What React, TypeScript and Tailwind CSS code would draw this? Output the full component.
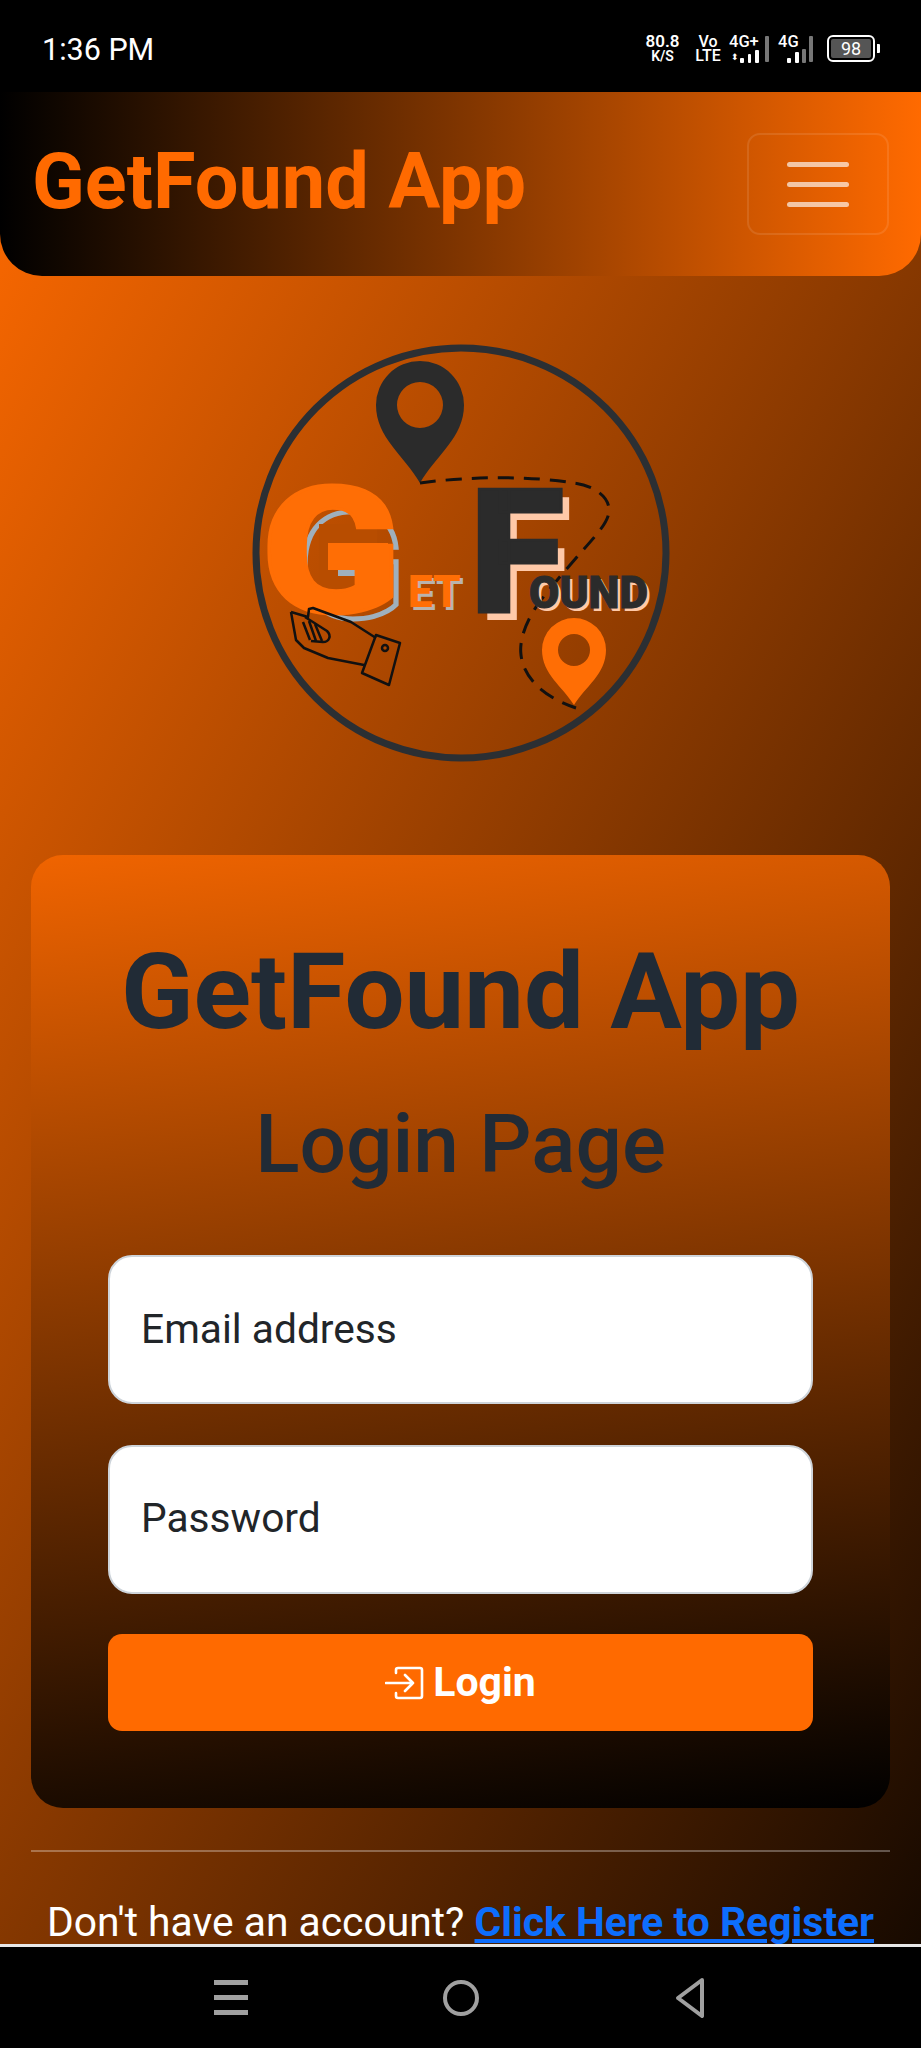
import React from "react";

const PinPath = ({ cx, cy, r, ri, tip, fill }: { cx: number; cy: number; r: number; ri: number; tip: number; fill: string }) => (
  <path
    fillRule="evenodd"
    fill={fill}
    d={`M${cx} ${tip} C${cx - r * 0.35} ${cy + r * 1.15} ${cx - r} ${cy + r * 0.75} ${cx - r} ${cy} A${r} ${r} 0 0 1 ${cx + r} ${cy} C${cx + r} ${cy + r * 0.75} ${cx + r * 0.35} ${cy + r * 1.15} ${cx} ${tip}Z M${cx - ri} ${cy} A${ri} ${ri} 0 1 0 ${cx + ri} ${cy} A${ri} ${ri} 0 1 0 ${cx - ri} ${cy}Z`}
  />
);

const Logo = () => (
  <svg viewBox="0 0 440 440" className="w-[440px] h-[440px]" style={{ fontFamily: "Roboto, sans-serif" }}>
    <circle cx="220" cy="223" r="205" fill="none" stroke="#2b2f33" strokeWidth="7" />
    <PinPath cx={179} cy={75} r={44} ri={23} tip={153} fill="#2b2b2b" />
    <path d="M179 153 C230 146 290 146 333 153 C350 155 368 165 368 180 C368 197 345 213 300 270 C285 290 278 310 280 325 C283 350 305 368 335 378" fill="none" stroke="#111" strokeWidth="3" strokeDasharray="16 10" />
    <text x="58" y="288" fontSize="146" fontWeight="900" textLength="104" lengthAdjust="spacingAndGlyphs" fill="none" stroke="#9fb0bd" strokeWidth="5">G</text>
    <rect x="78" y="194" width="58" height="70" fill="#b84d00" />
    <rect x="97" y="238" width="20" height="8" fill="#9fb0bd" />
    <text x="20" y="282" fontSize="176" fontWeight="900" textLength="140" lengthAdjust="spacingAndGlyphs" fill="#ff6e05" stroke="#ff6e05" strokeWidth="3">G</text>
    <rect x="87" y="213" width="60" height="27" fill="#ff6e05" />
    <text x="170" y="280" fontSize="44" fontWeight="900" fill="#b9b3ad">ET</text>
    <text x="167" y="277" fontSize="44" fontWeight="900" fill="#ff6e05">ET</text>
    <text x="237" y="290" fontSize="172" fontWeight="900" fill="#ffc9a8">F</text>
    <text x="229" y="282" fontSize="172" fontWeight="900" fill="#2b2b2b" stroke="#2b2b2b" strokeWidth="3">F</text>
    <text x="291" y="281" fontSize="44" fontWeight="900" fill="#ffc9a8">OUND</text>
    <text x="288" y="278" fontSize="44" fontWeight="900" fill="#2b2b2b" stroke="#2b2b2b" strokeWidth="1">OUND</text>
    <PinPath cx={333} cy={320} r={32} ri={16} tip={375} fill="#ff6e05" />
    <g fill="none" stroke="#111" strokeWidth="2.5" strokeLinejoin="round">
      <path d="M50 282 L55 310 L63 318 L87 328 L123 335" />
      <path d="M50 282 L67 287 L68 279 L72 278 L110 292 L135 308" />
      <path d="M135 305 L159 313 L148 355 L121 343 Z" />
      <circle cx="144" cy="318" r="3" />
      <path d="M64 287 L86 301 C91 306 88 312 82 312 L70 311" />
      <path d="M62 292 L69 310 M68 291 L75 311 M74 294 L81 311" />
    </g>
  </svg>
);

const Sig = ({ className }: { className: string }) => <div className={`w-[4px] rounded-[1px] ${className}`} />;

const StatusBar = () => (
  <div className="h-[92px] bg-black flex items-center justify-between pl-[42px] pr-[41px] text-white shrink-0">
    <span className="text-[30.5px] leading-none mt-[8px]">1:36 PM</span>
    <div className="flex items-center mt-[5px]">
      <div className="flex flex-col items-center font-semibold w-[33px]">
        <span className="text-[17px] leading-[15px]">80.8</span>
        <span className="text-[14px] leading-[14px]">K/S</span>
      </div>
      <div className="flex flex-col items-center font-medium w-[26px] ml-[16px]">
        <span className="text-[16px] leading-[15px]">Vo</span>
        <span className="text-[16px] leading-[14px]">LTE</span>
      </div>
      <div className="ml-[8px] flex flex-col w-[30px] font-medium">
        <span className="text-[16.5px] leading-[14px] whitespace-nowrap">4G+</span>
        <div className="flex items-end h-[14px]">
          <span className="text-[9px] leading-[12px] w-[12px] pl-[2px]">⬍</span>
          <Sig className="h-[5px] bg-white" />
          <Sig className="h-[9px] bg-white ml-[4px]" />
          <Sig className="h-[13px] bg-white ml-[4px]" />
        </div>
      </div>
      <Sig className="h-[26px] bg-[#777] ml-[6px]" />
      <div className="ml-[9px] flex flex-col w-[24px] font-medium">
        <span className="text-[16.5px] leading-[14px]">4G</span>
        <div className="flex items-end h-[14px] pl-[9px]">
          <Sig className="h-[5px] bg-white" />
          <Sig className="h-[11px] bg-white ml-[4px]" />
        </div>
      </div>
      <Sig className="h-[14px] bg-[#777] self-end" />
      <Sig className="h-[26px] bg-[#777] ml-[3px]" />
      <div className="ml-[14px] w-[48px] h-[27px] border-2 border-white rounded-[6px] p-[2px] flex">
        <div className="flex-1 bg-[#555] rounded-[2px] flex items-center justify-center text-[18px] leading-none">98</div>
      </div>
      <div className="ml-[2px] w-[3px] h-[9px] bg-white rounded-r-[1px]" />
    </div>
  </div>
);

const Field = ({ label }: { label: string }) => (
  <div className="h-[149px] bg-white border-2 border-[#ced4da] rounded-[24px] flex items-center pl-[31px] text-[40.7px] text-[#212529]">
    {label}
  </div>
);

export default function App() {
  return (
    <div className="w-[921px] h-[2048px] flex flex-col overflow-hidden bg-black" style={{ fontFamily: "Roboto, sans-serif" }}>
      <StatusBar />
      <div className="flex-1 min-h-0 overflow-hidden bg-[linear-gradient(119deg,#ff6a00_0%,#000_110%)]">
        <nav className="h-[184px] rounded-b-[42px] bg-[linear-gradient(90deg,#000,#ff6a00)] flex items-center justify-between pl-[32px] pr-[32px]">
          <span className="text-[77.5px] leading-none font-bold text-[#ff6a00] -mt-[4px]">GetFound App</span>
          <button className="w-[142px] h-[102px] rounded-[13px] border-2 border-white/10 flex flex-col items-center justify-center gap-[15px]">
            <span className="w-[62px] h-[5px] rounded-full bg-white/65" />
            <span className="w-[62px] h-[5px] rounded-full bg-white/65" />
            <span className="w-[62px] h-[5px] rounded-full bg-white/65" />
          </button>
        </nav>
        <div className="flex justify-center pt-[54px]">
          <Logo />
        </div>
        <div className="mx-[31px] mt-[85px] h-[953px] rounded-[32px] bg-[linear-gradient(172deg,#f06400,#000)] px-[77px] pt-[77px]">
          <h1 className="text-center text-[106.5px] leading-[120px] font-bold text-[#212b36]">GetFound App</h1>
          <h2 className="text-center text-[82px] leading-[100px] font-medium text-[#212b36] mt-[42px]">Login Page</h2>
          <div className="mt-[61px] flex flex-col gap-[40.5px]">
            <Field label="Email address" />
            <Field label="Password" />
            <button className="h-[97px] rounded-[14px] bg-[#ff6a00] flex items-center justify-center gap-[8px] text-white text-[41px] font-bold">
              <svg viewBox="0 0 40 34" className="w-[40px] h-[34px]" fill="none" stroke="currentColor" strokeWidth="2.6" strokeLinecap="round" strokeLinejoin="round">
                <path d="M11 7 V4 a2 2 0 0 1 2 -2 h22 a2 2 0 0 1 2 2 v26 a2 2 0 0 1 -2 2 h-22 a2 2 0 0 1 -2 -2 v-3" />
                <path d="M1 17 H28 M20 9 L28 17 L20 25" />
              </svg>
              Login
            </button>
          </div>
        </div>
        <div className="mx-[31px] mt-[42px] h-[2px] bg-white/30" />
        <p className="mt-[46px] text-center text-[40.8px] leading-[48px] text-white whitespace-nowrap">
          Don&apos;t have an account? <a className="font-bold text-[#0d6efd] underline">Click Here to Register</a>
        </p>
      </div>
      <div className="h-[104px] shrink-0 bg-black border-t-[3px] border-[#e8e8e8] flex items-center">
        <div className="ml-[214px] w-[34px] flex flex-col gap-[10px]">
          <div className="h-[5px] bg-[#a0a0a0]" />
          <div className="h-[5px] bg-[#a0a0a0]" />
          <div className="h-[5px] bg-[#a0a0a0]" />
        </div>
        <div className="ml-[195px] w-[36px] h-[36px] rounded-full border-[4px] border-[#a0a0a0]" />
        <svg viewBox="0 0 32 42" className="ml-[195px] w-[32px] h-[42px]" fill="none" stroke="#a0a0a0" strokeWidth="4" strokeLinejoin="round">
          <path d="M28 3 L4 21 L28 39 Z" />
        </svg>
      </div>
    </div>
  );
}
